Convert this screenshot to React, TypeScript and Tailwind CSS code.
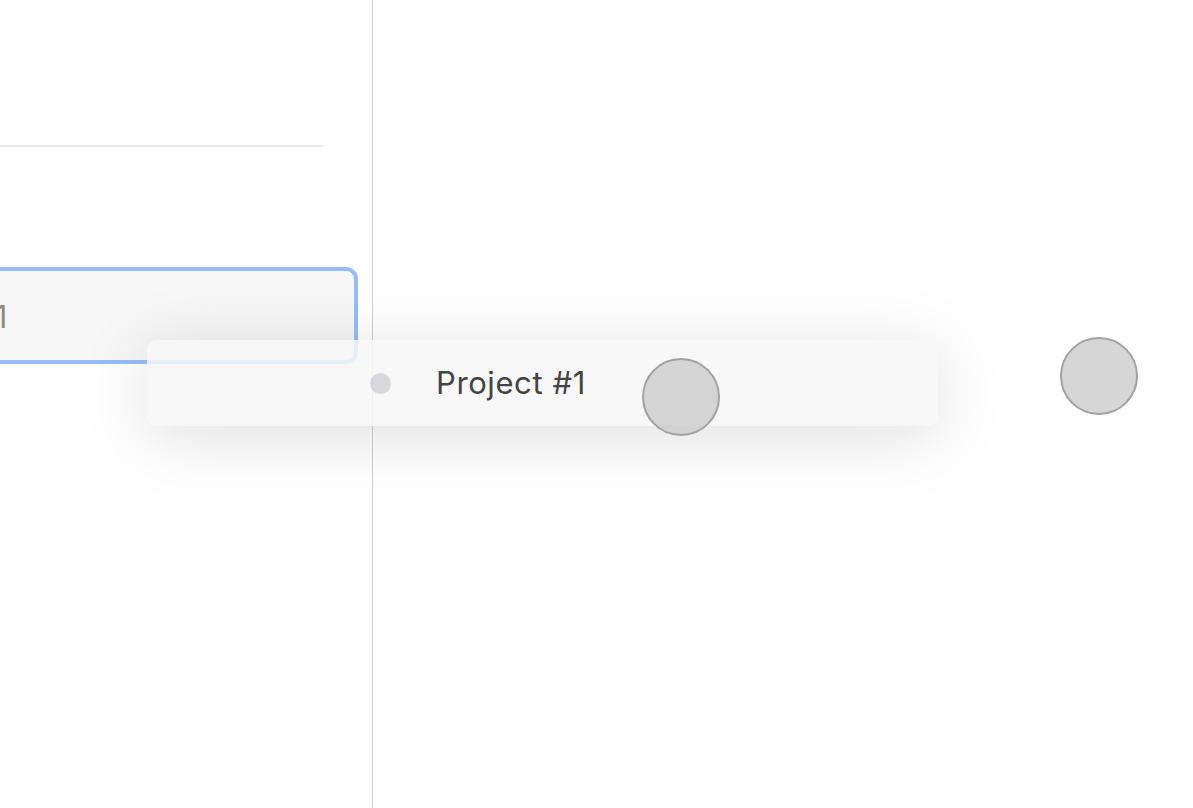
export default function App() {
  return (
    <div className="relative h-[808px] w-[1193px] overflow-hidden bg-white font-['Inter','Liberation_Sans',sans-serif]">
      <div className="flex h-full">
        <div className="h-full w-[373px] shrink-0 border-r border-[#d2d2d2]">
          <div className="mt-[145px] h-[2px] w-[323px] bg-[#e8e8e8]" />
          <div className="ml-[-161px] mt-[120px] flex h-[97px] w-[519px] items-center rounded-[12px] border-4 border-[#96bdf6] bg-[#f7f7f7] pl-[15px] pt-[4px]">
            <span className="text-[31px] tracking-[0.6px] text-[#8a8a8a]">Project #1</span>
          </div>
        </div>
        <div className="flex-1" />
      </div>

      <div className="absolute left-[147px] top-[340px] flex h-[86px] w-[791px] items-center rounded-[10px] bg-[#f7f7f7]/85 pl-[223px] shadow-[0_10px_70px_rgba(0,0,0,0.13)]">
        <span className="h-[21px] w-[21px] rounded-full bg-[#d8d8dc]" />
        <span className="ml-[45px] text-[31px] tracking-[0.6px] text-[#444444]">Project #1</span>
      </div>

      <div className="absolute left-[642px] top-[358px] h-[78px] w-[78px] rounded-full border-2 border-[#a2a2a2] bg-[#c8c8c8]/75" />
      <div className="absolute left-[1060px] top-[337px] h-[78px] w-[78px] rounded-full border-2 border-[#a2a2a2] bg-[#c8c8c8]/75" />
    </div>
  );
}
